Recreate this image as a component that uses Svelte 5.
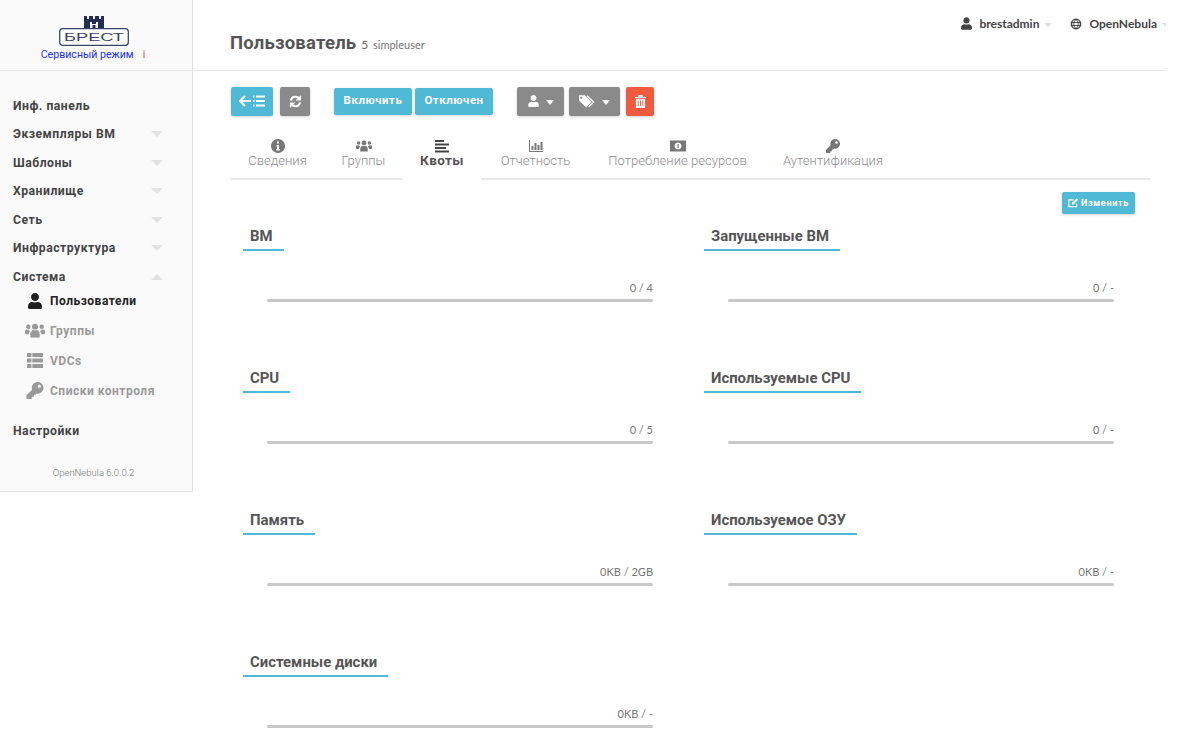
<script>
  const menu = [
    { label: 'Инф. панель' },
    { label: 'Экземпляры ВМ', arrow: 'down' },
    { label: 'Шаблоны', arrow: 'down' },
    { label: 'Хранилище', arrow: 'down' },
    { label: 'Сеть', arrow: 'down' },
    { label: 'Инфраструктура', arrow: 'down' },
    { label: 'Система', arrow: 'up' }
  ];
  const quotas = [
    { title: 'ВМ', value: '0 / 4' },
    { title: 'Запущенные ВМ', value: '0 / -' },
    { title: 'CPU', value: '0 / 5' },
    { title: 'Используемые CPU', value: '0 / -' },
    { title: 'Память', value: '0KB / 2GB' },
    { title: 'Используемое ОЗУ', value: '0KB / -' },
    { title: 'Системные диски', value: '0KB / -' }
  ];
  const KEY = 'M512 176C512 273 433 352 336 352c-11 0-22-1-33-3l-24 27a24 24 0 0 1-18 8H224v40c0 13-11 24-24 24h-40v40c0 13-11 24-24 24H24c-13 0-24-11-24-24v-78c0-6 3-12 7-17l162-162C163 214 160 195 160 176 160 79 239 0 336 0 433 0 512 79 512 176zM336 128c0 27 21 48 48 48s48-21 48-48-21-48-48-48-48 21-48 48z';
  const USER = 'M224 256c71 0 128-57 128-128S295 0 224 0 96 57 96 128s57 128 128 128zm90 32h-17c-22 10-47 16-73 16s-51-6-73-16h-17C60 288 0 348 0 422v42c0 27 22 48 48 48h352c26 0 48-21 48-48v-42c0-74-60-134-134-134z';
</script>

{#snippet user(cls)}
  <svg class={cls} viewBox="0 0 448 512"><path d={USER} /></svg>
{/snippet}
{#snippet users(cls)}
  <svg class={cls} viewBox="0 0 640 448">
    <circle cx="320" cy="100" r="95" /><circle cx="105" cy="105" r="70" /><circle cx="535" cy="105" r="70" />
    <path d="M170 448V340c0-75 50-130 95-130 18 10 35 14 55 14s37-4 55-14c45 0 95 55 95 130v108z" />
    <path d="M0 310v-60c0-35 25-60 55-60 15 10 35 14 65 12 10 18 20 30 40 42-25 25-35 55-37 96H40c-25 0-40-10-40-30zM640 310v-60c0-35-25-60-55-60-15 10-35 14-65 12-10 18-20 30-40 42 25 25 35 55 37 96h83c25 0 40-10 40-30z" />
  </svg>
{/snippet}
{#snippet key(cls)}
  <svg class={cls} viewBox="0 0 512 512"><path fill-rule="evenodd" d={KEY} /></svg>
{/snippet}

<div class="page">
  <aside class="sidebar">
    <div class="brand">
      <svg class="logo" viewBox="0 0 70 31" aria-label="Брест">
        <path fill="#232c55" fill-rule="evenodd" d="M25 1h3v3h2V1h4v3h2V1h4v3h2V1h3v12H25zM31 7v6h2.500v-3h3v3H39V7h-2v2h-4V7z" />
        <rect x="0.700" y="13.700" width="68.600" height="16.600" rx="3" fill="#fff" stroke="#3a4268" stroke-width="1.300" />
        <text x="35" y="25.500" text-anchor="middle" textLength="60" lengthAdjust="spacingAndGlyphs">БРЕСТ</text>
      </svg>
      <div class="mode"><span>Сервисный режим</span><b>i</b></div>
    </div>
    <nav class="menu">
      {#each menu as item}
        <div class="item">
          <span>{item.label}</span>
          {#if item.arrow}<i class="arrow {item.arrow}"></i>{/if}
        </div>
      {/each}
      <div class="sub active">{@render user('sicon u')}<span>Пользователи</span></div>
      <div class="sub">{@render users('sicon g')}<span>Группы</span></div>
      <div class="sub">
        <svg class="sicon l" viewBox="0 0 18 15" preserveAspectRatio="none"><path d="M0 0h5v4H0zM6 0h12v4H6zM0 5.500h5v4H0zM6 5.500h12v4H6zM0 11h5v4H0zM6 11h12v4H6z" /></svg>
        <span>VDCs</span>
      </div>
      <div class="sub">{@render key('sicon k')}<span>Списки контроля</span></div>
      <div class="item settings"><span>Настройки</span></div>
    </nav>
    <div class="version">OpenNebula 6.0.0.2</div>
  </aside>

  <main class="main">
    <header class="topbar">
      <h1>Пользователь <small><em>5</em> simpleuser</small></h1>
      <div class="usermenu">
        <span class="um first">{@render user('umicon')}brestadmin<i class="caret"></i></span>
        <span class="um">
          <svg class="umicon globe" viewBox="0 0 16 16"><circle cx="8" cy="8" r="6.200" fill="none" stroke="#444" stroke-width="2" /><path d="M2 6h12M2 10h12M8 2c-4 4-4 8 0 12M8 2c4 4 4 8 0 12" fill="none" stroke="#444" stroke-width="1.300" /></svg>
          OpenNebula<i class="caret"></i>
        </span>
      </div>
    </header>

    <div class="content">
      <div class="actions">
        <button class="btn blue back" aria-label="Назад">
          <svg viewBox="0 0 26 12" width="26" height="12"><path d="M6 1 1 6l5 5M1 6h11" fill="none" stroke="#fff" stroke-width="2" /><path d="M14 1.500h1.500M17 1.500h9M14 6h1.500M17 6h9M14 10.500h1.500M17 10.500h9" stroke="#fff" stroke-width="1.800" /></svg>
        </button>
        <button class="btn grey refresh" aria-label="Обновить">
          <svg viewBox="0 0 14 14" width="13" height="13"><path d="M2 6a5 5 0 0 1 9-2M12 8a5 5 0 0 1-9 2" fill="none" stroke="#fff" stroke-width="2.200" /><path d="M13 0v6H7zM1 14V8h6z" fill="#fff" /></svg>
        </button>
        <div class="pair">
          <button class="btn blue text">Включить</button>
          <button class="btn blue text">Отключен</button>
        </div>
        <button class="btn grey drop u">
          {@render user('bicon')}<i class="dcaret"></i>
        </button>
        <button class="btn grey drop t">
          <svg viewBox="0 0 18 14" width="16" height="13"><path fill="#fff" d="M0 0h6.500L14 7.500 8 13.500 0 6zM2.500 1.500a1.300 1.300 0 1 0 .01 0z" fill-rule="evenodd" /><path d="M9 0.500 16.500 7.500 11 13" fill="none" stroke="#fff" stroke-width="1.500" /></svg>
          <i class="dcaret"></i>
        </button>
        <button class="btn red trash" aria-label="Удалить">
          <svg viewBox="0 0 12 14" width="11" height="13"><path fill="#fff" fill-rule="evenodd" d="M4 0h4l1 2h3v1.500H0V2h3zM1 4.500h10V14H1zM3 6v6h1V6zM5.500 6v6h1V6zM8 6v6h1V6z" /></svg>
        </button>
      </div>

      <div class="tabs">
        <div class="tab t1">
          <svg viewBox="0 0 14 14"><path fill-rule="evenodd" d="M7 0a7 7 0 1 0 .01 0zM6 2.500h2v2H6zM5.500 6h2.500v4h1v1.500H5V10h1V7.500h-.5z" /></svg>
          <span>Сведения</span>
        </div>
        <div class="tab t2">{@render users('')}<span>Группы</span></div>
        <div class="tab t3 active">
          <svg viewBox="0 0 14 14"><path d="M0 1h9v2H0zM0 4.500h14v2H0zM0 8h11v2H0zM0 11.500h14v2H0z" /></svg>
          <span>Квоты</span>
        </div>
        <div class="tab t4">
          <svg viewBox="0 0 14 14"><path d="M0 1h1v11h13v1H0zM2.500 7h2v4h-2zM5.500 4h2v7h-2zM8.500 6h2v5h-2zM11.500 3h2v8h-2z" /></svg>
          <span>Отчетность</span>
        </div>
        <div class="tab t5">
          <svg viewBox="0 0 16 11"><path fill-rule="evenodd" d="M0 0h16v11H0zM8 2a3.500 3.500 0 1 0 .01 0zM7.500 3.500h1.200v4h-1.200z" /></svg>
          <span>Потребление ресурсов</span>
        </div>
        <div class="tab t6">{@render key('')}<span>Аутентификация</span></div>
      </div>

      <div class="editrow">
        <button class="btn blue edit">
          <svg viewBox="0 0 14 12" width="11" height="10"><path d="M11 7v3.500H1V2h6" fill="none" stroke="#fff" stroke-width="1.600" /><path d="M5 6 11 0l2 2-6 6H5z" fill="#fff" /></svg>
          Изменить
        </button>
      </div>

      <div class="quotas">
        {#each quotas as q}
          <section class="quota">
            <h3>{q.title}</h3>
            <div class="value">{q.value}</div>
            <div class="bar"></div>
          </section>
        {/each}
      </div>
    </div>
  </main>
</div>

<style>
  :global(body) {
    margin: 0;
    background: #fff;
    font-family: Roboto, sans-serif;
    overflow: hidden;
  }
  .page {
    display: flex;
    align-items: flex-start;
    width: 1166px;
    height: 743px;
    overflow: hidden;
  }
  .sidebar {
    width: 192px;
    height: 491px;
    flex: none;
    background: #fafafa;
    border-right: 1px solid #e0e0e0;
    border-bottom: 1px solid #e0e0e0;
    border-bottom-right-radius: 2px;
    display: flex;
    flex-direction: column;
  }
  .brand {
    border-bottom: 1px solid #e6e6e6;
    display: flex;
    flex-direction: column;
    align-items: center;
    padding-top: 15px;
    box-sizing: border-box;
    height: 71px;
  }
  .logo {
    width: 70px;
    height: 31px;
    display: block;
    margin-left: -5px;
  }
  .logo text {
    font: 400 10px "Liberation Sans", sans-serif;
    fill: #3a4268;
  }
  .mode {
    margin-top: 2px;
    font-size: 10.600px;
    line-height: 14px;
    color: #1b30ee;
    display: flex;
    align-items: center;
    margin-left: -6px;
  }
  .mode b {
    color: #ef8a5f;
    margin-left: 9px;
    font-size: 10px;
  }
  .menu {
    padding-top: 20.5px;
  }
  .item {
    height: 28.5px;
    padding: 0 29px 0 13px;
    display: flex;
    align-items: center;
    justify-content: space-between;
    font-size: 12.200px;
    font-weight: 700;
    letter-spacing: 0.5px;
    color: #444;
  }
  .item.settings {
    margin-top: 11px;
  }
  .arrow {
    width: 0;
    height: 0;
    border-left: 6px solid transparent;
    border-right: 6px solid transparent;
  }
  .arrow.down {
    border-top: 6px solid #e2e2e2;
  }
  .arrow.up {
    border-bottom: 6px solid #e2e2e2;
  }
  .sub {
    height: 30px;
    display: flex;
    align-items: center;
    font-size: 12px;
    font-weight: 700;
    letter-spacing: 0.5px;
    color: #999;
    padding-left: 25px;
  }
  .sub span {
    margin-left: 5px;
  }
  .sub.active {
    color: #222;
    margin-top: -5.5px;
  }
  .sicon {
    width: 20px;
    height: 15px;
    fill: #999;
    flex: none;
  }
  .sicon.u {
    fill: #222;
    height: 16px;
  }
  .sicon.l {
    width: 16px;
    margin: 0 2px;
  }
  .sicon.k {
    height: 17px;
  }
  .version {
    margin-top: 22px;
    padding-right: 5px;
    text-align: center;
    font-size: 9.500px;
    font-weight: 300;
    color: #777;
    font-family: Roboto, sans-serif;
  }
  .main {
    flex: 1;
    min-width: 0;
  }
  .topbar {
    height: 71px;
    box-sizing: border-box;
    border-bottom: 1px solid #e6e6e6;
    position: relative;
    padding: 30px 0 0 37px;
  }
  h1 {
    margin: 0;
    font-family: Roboto, sans-serif;
    font-size: 18.500px;
    line-height: 26px;
    font-weight: 700;
    color: #555;
    letter-spacing: 0.2px;
  }
  h1 small {
    font-family: Lato, sans-serif;
    font-size: 11px;
    font-weight: 400;
    color: #777;
    letter-spacing: 0;
  }
  h1 em {
    font-style: normal;
    font-size: 12px;
    font-weight: 400;
    color: #666;
    margin-right: 2px;
  }
  .usermenu {
    position: absolute;
    top: 15px;
    right: -4px;
    display: flex;
    font-family: Lato, sans-serif;
    font-size: 12px;
    font-weight: 700;
    color: #444;
  }
  .um {
    display: flex;
    align-items: center;
    height: 17px;
  }
  .um.first {
    margin-right: 18px;
  }
  .umicon {
    width: 11px;
    height: 13px;
    fill: #444;
    margin-right: 7px;
  }
  .umicon.globe {
    width: 12px;
    height: 12px;
  }
  .caret {
    width: 0;
    height: 0;
    margin-left: 5px;
    margin-top: 3px;
    border-left: 4px solid transparent;
    border-right: 4px solid transparent;
    border-top: 4px solid #ddd;
  }
  .content {
    padding: 15px 16px 0 38px;
  }
  .actions {
    display: flex;
    align-items: center;
    height: 30px;
  }
  .btn {
    border: 0;
    padding: 0;
    margin: 0;
    border-radius: 2px;
    color: #fff;
    display: inline-flex;
    align-items: center;
    justify-content: center;
    font-family: Roboto, sans-serif;
    box-shadow: 0 1px 3px rgba(0, 0, 0, 0.18);
  }
  .blue {
    background: #4fb9d6;
  }
  .grey {
    background: #8a8a8a;
  }
  .red {
    background: #f05b40;
  }
  .back {
    width: 42px;
    height: 29px;
    margin-right: 7px;
  }
  .refresh {
    width: 30px;
    height: 29px;
  }
  .pair {
    display: flex;
    gap: 3px;
    margin-left: 24px;
    margin-right: 24px;
  }
  .text {
    width: 78px;
    height: 27px;
    padding-bottom: 2px;
    font-size: 11.500px;
    font-weight: 700;
    letter-spacing: 0.5px;
  }
  .drop {
    height: 29px;
    gap: 7px;
  }
  .drop.u {
    width: 47px;
    margin-right: 5px;
  }
  .drop.t {
    width: 51px;
    margin-right: 6px;
  }
  .bicon {
    width: 11px;
    height: 12px;
    fill: #fff;
  }
  .dcaret {
    width: 0;
    height: 0;
    border-left: 4.500px solid transparent;
    border-right: 4.500px solid transparent;
    border-top: 5px solid #fff;
    margin-top: 2px;
  }
  .trash {
    width: 28px;
    height: 29px;
  }
  .tabs {
    display: flex;
    margin-top: 23px;
    width: 919px;
    height: 39px;
    border-bottom: 2px solid #e8e8e8;
  }
  .tab {
    height: 41px;
    display: flex;
    flex-direction: column;
    align-items: center;
    font-size: 13px;
    font-weight: 300;
    color: #8c8c8c;
    letter-spacing: 0.05px;
  }
  .t1 {
    width: 93px;
  }
  .t2 {
    width: 79px;
  }
  .t3 {
    width: 78px;
  }
  .t4 {
    width: 109px;
  }
  .t5 {
    width: 175px;
  }
  .t6 {
    width: 136px;
  }
  .tab svg {
    width: 16px;
    height: 14px;
    fill: #777;
    flex: none;
  }
  .tab span {
    line-height: 17px;
    margin-top: -1px;
  }
  .tab.active {
    background: #fff;
    font-weight: 700;
    color: #555;
    letter-spacing: 0.4px;
    font-size: 13.500px;
  }
  .tab.active svg {
    fill: #444;
  }
  .editrow {
    display: flex;
    justify-content: flex-end;
    padding: 12px 15px 0 0;
  }
  .edit {
    width: 73px;
    height: 22px;
    gap: 2px;
    font-size: 9px;
    font-weight: 700;
    letter-spacing: 0.7px;
  }
  .quotas {
    display: grid;
    grid-template-columns: 461px 461px;
    grid-auto-rows: 142px;
    padding-left: 12px;
    margin-top: 11px;
  }
  .quota h3 {
    display: inline-block;
    margin: 0;
    padding: 0 11px 1px 7px;
    font-size: 14.900px;
    line-height: 23px;
    font-weight: 700;
    color: #555;
    border-bottom: 2px solid #4fb9d6;
    font-family: Roboto, sans-serif;
  }
  .value {
    width: 410px;
    margin-top: 29px;
    text-align: right;
    font-family: Lato, sans-serif;
    font-size: 11px;
    line-height: 16px;
    color: #777;
  }
  .bar {
    width: 386px;
    height: 3px;
    margin-left: 24px;
    margin-top: 3px;
    border-radius: 2px;
    background: #c8c8c8;
  }
</style>
